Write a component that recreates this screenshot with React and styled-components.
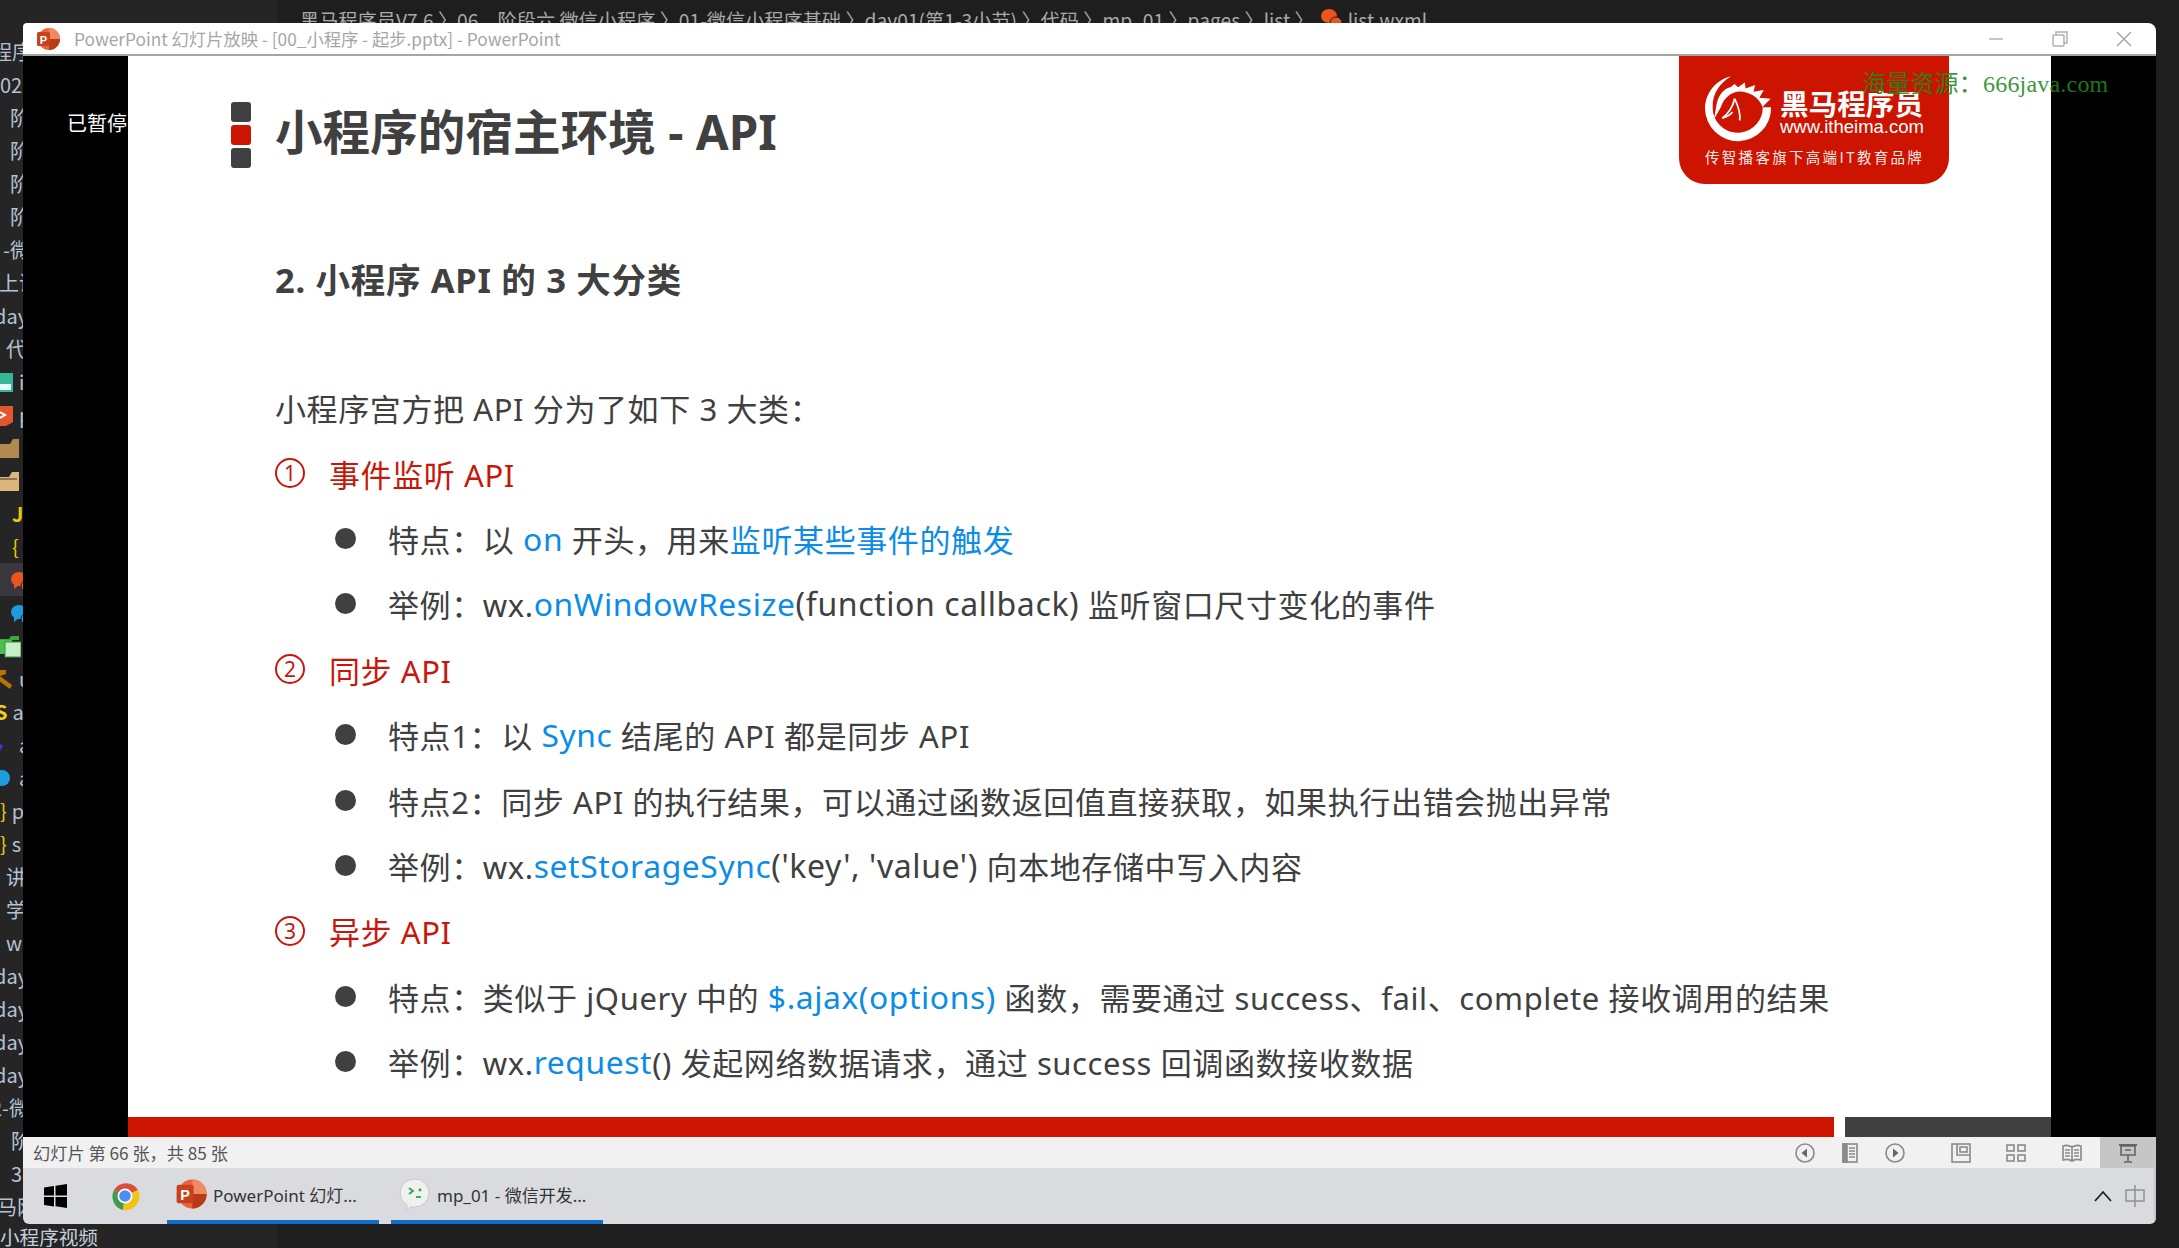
import styled, { createGlobalStyle } from "styled-components";

const GlobalStyle = createGlobalStyle`
    html, body { margin: 0; padding: 0; background: #1e1e1e; }
    body { font-family: "Noto Sans", "Noto Sans CJK SC", sans-serif; overflow: hidden; }
    * { box-sizing: border-box; }
`;

const Page = styled.div`
    width: 2179px;
    height: 1248px;
    display: flex;
    flex-direction: column;
    position: relative;
    overflow: hidden;
    background: #1e1e1e;
`;

/* editor behind the powerpoint window */
const TopStrip = styled.div`
    height: 23px;
    display: flex;
    overflow: hidden;
`;

const SidePatch = styled.div`
    width: 277px;
    flex-shrink: 0;
    background: #252526;
`;

const Breadcrumb = styled.div`
    padding: 7px 0 0 23px;
    font-family: "Noto Sans CJK SC", sans-serif;
    font-size: 19.2px;
    line-height: 26px;
    color: #a9a9a9;
    white-space: nowrap;
    display: flex;
    align-items: flex-start;
    gap: 6px;
`;

const Middle = styled.div`
    height: 1201px;
    display: flex;
`;

const SideList = styled.div`
    width: 23px;
    flex-shrink: 0;
    padding-top: 12px;
    background: #252526;
    overflow: hidden;
`;

const SideRow = styled.div`
    height: 33px;
    width: 60px;
    margin-left: ${(p) => p.$indent || 0}px;
    display: flex;
    align-items: center;
    gap: 5px;
    font-family: "Noto Sans CJK SC", sans-serif;
    font-size: 20px;
    color: ${(p) => p.$color || "#b4c2d2"};
    font-weight: ${(p) => (p.$bold ? 700 : 400)};
    white-space: nowrap;
`;

const RowLabel = styled.span`
    color: #b4c2d2;
    font-weight: 400;
`;

const RowShade = styled.div`
    height: 33px;
    background: #37373d;
`;

const RightGutter = styled.div`
    width: 23px;
    flex-shrink: 0;
    background: #1e1e1e;
`;

const BottomStrip = styled.div`
    height: 24px;
    display: flex;
    overflow: hidden;
`;

const BottomSide = styled.div`
    width: 277px;
    background: #252526;
    font-family: "Noto Sans CJK SC", sans-serif;
    font-size: 19.6px;
    line-height: 26px;
    color: #c4cedb;
    white-space: nowrap;
`;

const Window = styled.div`
    width: 2133px;
    flex-shrink: 0;
    display: flex;
    flex-direction: column;
    border-radius: 4px 8px 6px 6px;
    overflow: hidden;
`;

const TitleBar = styled.div`
    height: 33px;
    flex-shrink: 0;
    display: flex;
    align-items: center;
    padding-left: 13px;
    background: #fff;
    border-bottom: 2px solid #a5a5a5;
`;

const TitleText = styled.div`
    margin-left: 14px;
    font-family: "Noto Sans CJK SC", sans-serif;
    font-size: 17.3px;
    color: #a6a6a6;
    white-space: nowrap;
    flex: 1;
`;

const WinControls = styled.div`
    display: flex;
    align-items: center;
    gap: 44px;
    padding-right: 22px;
`;

const Stage = styled.div`
    flex: 1;
    display: flex;
    background: #000;
    min-height: 0;
`;

const BlackSide = styled.div`
    width: 105px;
    flex-shrink: 0;
    padding: 52px 0 0 44px;
    overflow: hidden;
    color: #fff;
    font-family: "Noto Sans CJK SC", sans-serif;
    font-size: 20px;
    line-height: 30px;
    white-space: nowrap;
`;

const Slide = styled.div`
    width: 1923px;
    flex-shrink: 0;
    position: relative;
    background: #fff;
    display: flex;
    flex-direction: column;
    color: #404040;
`;

const SlideBody = styled.div`
    flex: 1;
    padding: 46px 0 0 147px;
`;

const TitleRow = styled.div`
    height: 66px;
    margin-left: -44px;
    display: flex;
    align-items: center;
    gap: 24px;
`;

const Marker = styled.div`
    width: 20px;
    display: flex;
    flex-direction: column;
    gap: 3px;
`;

const MarkerBlock = styled.div`
    height: 20px;
    border-radius: 3px;
    background: ${(p) => (p.$red ? "#cc1400" : "#404040")};
`;

const SlideTitle = styled.h1`
    margin: -6px 0 0;
    font-family: "Noto Sans", "Noto Sans CJK SC", sans-serif;
    font-size: 47.6px;
    line-height: 66px;
    font-weight: 700;
    white-space: nowrap;
`;

const SubTitle = styled.h2`
    margin: 89px 0 0;
    font-size: 34.5px;
    line-height: 46px;
    letter-spacing: 0.7px;
    font-weight: 700;
    white-space: nowrap;
`;

const List = styled.div`
    margin-top: 72px;
`;

const Line = styled.div`
    height: 65.4px;
    display: flex;
    align-items: center;
    font-size: 31px;
    letter-spacing: 0.6px;
    white-space: pre;
    color: ${(p) => (p.$red ? "#c8170a" : "inherit")};
    padding-left: ${(p) => (p.$bullet ? 60 : 0)}px;
`;

const Dot = styled.span`
    width: 21px;
    height: 21px;
    border-radius: 50%;
    background: #404040;
    margin-right: 32px;
    flex-shrink: 0;
`;

const NumberMark = styled.span`
    width: 30px;
    height: 30px;
    border: 2px solid #c8170a;
    border-radius: 50%;
    margin-right: 24px;
    font-size: 21px;
    line-height: 26px;
    text-align: center;
    letter-spacing: 0;
    flex-shrink: 0;
`;

const Blue = styled.span`
    color: #0a8ce8;
    font-size: ${(p) => (p.$latin ? "31.8px" : "inherit")};
`;

const Latin = styled.span`
    font-size: 32px;
`;

const Footer = styled.div`
    height: 20px;
    flex-shrink: 0;
    display: flex;
    gap: 11px;
`;

const FooterBar = styled.div`
    background: ${(p) => (p.$dark ? "#404040" : "#cc1400")};
    flex: ${(p) => (p.$dark ? "0 0 206px" : "1")};
`;

const Logo = styled.div`
    position: absolute;
    top: 0;
    right: 102px;
    width: 270px;
    height: 128px;
    padding: 20px 25px 0 26px;
    background: #cc1400;
    border-radius: 0 0 26px 26px;
    color: #fff;
`;

const LogoMain = styled.div`
    display: flex;
    align-items: center;
    gap: 9px;
`;

const LogoWords = styled.div`
    display: flex;
    flex-direction: column;
    padding-top: 8px;
`;

const LogoName = styled.div`
    font-size: 28.6px;
    line-height: 28px;
    font-weight: 700;
    font-family: "Noto Sans CJK SC", sans-serif;
    white-space: nowrap;
`;

const LogoUrl = styled.div`
    font-family: "Liberation Sans", sans-serif;
    font-size: 18.5px;
    line-height: 20px;
    white-space: nowrap;
`;

const LogoTag = styled.div`
    margin-top: 5px;
    font-family: "Noto Sans CJK SC", sans-serif;
    font-size: 14.5px;
    line-height: 20px;
    letter-spacing: 2.3px;
    white-space: nowrap;
    opacity: 0.9;
`;

const Watermark = styled.div`
    position: absolute;
    top: 67px;
    left: 1862px;
    font-family: "Liberation Serif", "Noto Sans CJK SC", serif;
    font-size: 24px;
    letter-spacing: 0.2px;
    line-height: 34px;
    color: #1d8a1d;
    opacity: 0.88;
    white-space: nowrap;
`;

const StatusBar = styled.div`
    height: 31px;
    flex-shrink: 0;
    display: flex;
    align-items: center;
    background: #f1f1f1;
    padding-left: 10px;
`;

const StatusText = styled.div`
    flex: 1;
    font-family: "Noto Sans CJK SC", sans-serif;
    font-size: 17.2px;
    color: #555;
    white-space: nowrap;
`;

const StatusIcons = styled.div`
    height: 100%;
    display: flex;
    align-items: center;
`;

const StatusBtn = styled.div`
    width: ${(p) => p.$w}px;
    margin-right: ${(p) => p.$gap || 0}px;
    height: 100%;
    display: flex;
    align-items: center;
    justify-content: center;
    background: ${(p) => (p.$active ? "#c6c6c6" : "transparent")};
`;

const Taskbar = styled.div`
    height: 56px;
    flex-shrink: 0;
    display: flex;
    align-items: stretch;
    background: #d9dbdf;
    border-right: 2px solid #c4c6ca;
`;

const StartSlot = styled.div`
    width: ${(p) => p.$w}px;
    flex-shrink: 0;
    display: flex;
    align-items: center;
    justify-content: center;
`;

const TaskGroup = styled.div`
    display: flex;
    padding-left: 5px;
`;

const TaskButton = styled.div`
    width: 212px;
    margin-right: 12px;
    flex-shrink: 0;
    display: flex;
    align-items: center;
    gap: 6px;
    padding-left: 8px;
    border-bottom: 4px solid #0f6fc6;
    font-family: "Noto Sans", "Noto Sans CJK SC", sans-serif;
    font-size: 17px;
    color: #333;
    white-space: nowrap;
`;

const Tray = styled.div`
    margin-left: auto;
    display: flex;
    align-items: center;
    gap: 12px;
    padding-right: 9px;
`;

const sideRows = [
    { text: "程序", indent: -8 },
    { text: "02", indent: 0 },
    { text: "阶", indent: 10 },
    { text: "阶", indent: 10 },
    { text: "阶", indent: 10 },
    { text: "阶", indent: 10 },
    { text: "-微", indent: 3 },
    { text: "上课", indent: -1 },
    { text: "day", indent: -6 },
    { text: "代", indent: 6 },
    { icon: "image", text: "i", indent: -7 },
    { icon: "html", text: "p", indent: -7 },
    { icon: "folder", indent: -1 },
    { icon: "open", indent: -1 },
    { text: "J", indent: 12, color: "#e8c80e", bold: true },
    { text: "{", indent: 12, color: "#e8c80e" },
    { icon: "chatRed", indent: 10, shade: true },
    { icon: "chatBlue", indent: 10 },
    { icon: "sheet", indent: 0 },
    { icon: "key", text: "u", indent: -7 },
    { text: "S", indent: -5, color: "#f2cf14", bold: true, after: "a" },
    { icon: "purple", text: "a", indent: -7 },
    { icon: "dot", text: "a", indent: -7 },
    { text: "}", indent: 0, color: "#e8c80e", after: "p" },
    { text: "}", indent: 0, color: "#e8c80e", after: "s" },
    { text: "讲", indent: 6 },
    { text: "学", indent: 6 },
    { text: "w", indent: 6 },
    { text: "day", indent: -6 },
    { text: "day", indent: -6 },
    { text: "day", indent: -6 },
    { text: "day", indent: -6 },
    { text: "2-微", indent: -9 },
    { text: "阶", indent: 11 },
    { text: "3", indent: 11 },
    { text: "马网", indent: -3 },
];

function SideIcon({ kind }) {
    const size = { width: 21, height: 24, viewBox: "0 0 21 24", style: { flexShrink: 0 } };
    if (kind === "image") return <svg {...size}><rect x="0" y="3" width="20" height="19" fill="#35b89a" /><rect x="2" y="14" width="16" height="6" fill="#e6fff6" /></svg>;
    if (kind === "html") return <svg {...size}><path d="M0 3h20v16l-7 4H0z" fill="#e4572e" /><path d="M7 9l5 3-5 3" stroke="#fff" strokeWidth="2" fill="none" /></svg>;
    if (kind === "folder") return <svg {...size}><path d="M0 8h11l3-5h6v19H0z" fill="#b08a50" /></svg>;
    if (kind === "open") return <svg {...size}><path d="M0 8h10l3-5h7v19H0z" fill="#dcb67a" /><path d="M0 10h18" stroke="#3a3224" strokeWidth="1" /></svg>;
    if (kind === "chatRed" || kind === "chatBlue") {
        const c = kind === "chatRed" ? "#e8561e" : "#1f9be0";
        return <svg {...size}><ellipse cx="9" cy="11" rx="8" ry="7" fill={c} /><path d="M4 16v5l5-4z" fill={c} /><circle cx="17" cy="18" r="6" fill={c} stroke="#252526" /></svg>;
    }
    if (kind === "sheet") return <svg {...size}><path d="M0 5h9l2-3h8v4H0z" fill="#3aa83f" /><rect x="0" y="6" width="12" height="14" fill="#4cc04f" /><rect x="5" y="8" width="16" height="15" fill="#c7f0c9" stroke="#2e9c34" /></svg>;
    if (kind === "key") return <svg {...size}><path d="M1 3h12v4L7 9l12 9-2 4L3 12 0 14z" fill="#b87400" /></svg>;
    if (kind === "purple") return <svg {...size}><path d="M0 2l6 8 4 3-3 5-7 5z" fill="#4a2ee8" /><circle cx="5" cy="10" r="2" fill="#fff" /></svg>;
    return <svg {...size}><circle cx="9" cy="12" r="8" fill="#1f9be0" /></svg>;
}

function SideEntries() {
    return sideRows.map((row, i) => {
        const inner = (
            <SideRow key={i} $indent={row.indent} $color={row.color} $bold={row.bold}>
                {row.icon && <SideIcon kind={row.icon} />}
                {row.icon ? <RowLabel>{row.text}</RowLabel> : row.text}
                {row.after && <RowLabel>{row.after}</RowLabel>}
            </SideRow>
        );
        return row.shade ? <RowShade key={i}>{inner}</RowShade> : inner;
    });
}

function PptIcon({ size = 24 }) {
    return (
        <svg width={size} height={size + 2} viewBox="0 0 24 26" style={{ flexShrink: 0 }}>
            <circle cx="13" cy="13" r="11" fill="#e8663a" />
            <path d="M13 2a11 11 0 0 1 11 11H13z" fill="#f08a60" />
            <path d="M13 13h11a11 11 0 0 1-11 11z" fill="#b93a18" />
            <rect x="1" y="6" width="13" height="14" rx="1.5" fill="#c8401c" />
            <text x="7.5" y="17.5" textAnchor="middle" fontSize="11" fontWeight="700" fill="#fff" fontFamily="Liberation Sans, sans-serif">P</text>
        </svg>
    );
}

// coordinates follow the logo crop, circle centre at 150,155
function HorseMark() {
    return (
        <svg width="66" height="66" viewBox="54 59 192 192" fill="#fff" style={{ flexShrink: 0 }}>
            <path d="M130 60C85 70 54 110 54 155A96 96 0 0 0 246 150L222 150A73 73 0 0 1 78 168C70 120 90 85 130 60Z" />
            <path d="M80 185L88 140C95 110 112 95 128 92L140 82L150 92L170 78L172 95L200 85L195 105L225 100L212 122L245 125L225 145L222 150C215 130 195 110 165 105C135 100 110 120 100 150Z" />
            <path d="M140 125C135 150 120 170 104 182M104 182C118 178 128 172 134 164M140 125C150 145 158 165 155 188" stroke="#fff" strokeWidth="5" fill="none" />
        </svg>
    );
}

function TitleButtons() {
    return (
        <WinControls>
            <svg width="20" height="20" viewBox="0 0 20 20"><path d="M3 10h14" stroke="#b5b5b5" strokeWidth="1.6" /></svg>
            <svg width="20" height="20" viewBox="0 0 20 20" fill="none" stroke="#b0b0b0" strokeWidth="1.5"><rect x="3" y="6" width="11" height="11" rx="1" /><path d="M6 6V3h11v11h-3" /></svg>
            <svg width="20" height="20" viewBox="0 0 20 20"><path d="M3 3l14 14M17 3L3 17" stroke="#a8a8a8" strokeWidth="1.5" /></svg>
        </WinControls>
    );
}

function StatusIcon({ kind }) {
    const c = "#8a8a8a";
    const props = { width: 22, height: 22, viewBox: "0 0 22 22", fill: "none", stroke: c, strokeWidth: 1.6 };
    if (kind === "prev") return <svg {...props}><circle cx="11" cy="11" r="9" /><path d="M13 6.5v9L7.5 11z" fill="#666" stroke="none" /></svg>;
    if (kind === "next") return <svg {...props}><circle cx="11" cy="11" r="9" /><path d="M9 6.5v9l5.5-4.500z" fill="#666" stroke="none" /></svg>;
    if (kind === "notes") return <svg {...props}><rect x="4" y="2" width="14" height="18" /><rect x="4" y="2" width="4" height="18" fill={c} /><path d="M10 6h6M10 9h6M10 12h6M10 15h6" /></svg>;
    if (kind === "normal") return <svg {...props}><rect x="2" y="2" width="18" height="18" /><path d="M7 2v11h13" /><rect x="10" y="5" width="7" height="5" /></svg>;
    if (kind === "sorter") return <svg {...props}><rect x="2" y="3" width="7" height="6" /><rect x="13" y="3" width="7" height="6" /><rect x="2" y="13" width="7" height="6" /><rect x="13" y="13" width="7" height="6" /></svg>;
    if (kind === "reading") return <svg {...props}><path d="M11 5C8 3 5 3 2 4v14c3-1 6-1 9 1 3-2 6-2 9-1V4c-3-1-6-1-9 1zM11 5v15M4 8h5M4 11h5M4 14h5M13 8h5M13 11h5M13 14h5" /></svg>;
    return <svg {...props} stroke="#666"><path d="M2 3h18" strokeWidth="2" /><path d="M4 4h14v9H4zM11 13v6M7 20h8M8 8h6" /></svg>;
}

function WinLogo() {
    return (
        <svg width="23" height="24" viewBox="0 0 23 24" fill="#000">
            <path d="M0 3.500L10 2v9.500H0zM11.500 1.800L23 0v11.500H11.500zM0 13h10v9.500L0 21zM11.500 13H23v11l-11.500-1.700z" />
        </svg>
    );
}

function ChromeLogo() {
    return (
        <svg width="30" height="30" viewBox="0 0 30 30">
            <path d="M15 15L4 9A14 14 0 0 1 28 9z" fill="#dd4b39" />
            <path d="M15 15L4 9a14 14 0 0 0 9 20z" fill="#3f9b4f" />
            <path d="M15 15l13-6a14 14 0 0 1-15 20z" fill="#f3c31c" />
            <circle cx="15" cy="15" r="7.500" fill="#fff" />
            <circle cx="15" cy="15" r="5.800" fill="#4a8ef0" />
        </svg>
    );
}

function DevToolIcon() {
    return (
        <svg width="32" height="34" viewBox="0 0 32 34" style={{ flexShrink: 0 }}>
            <path d="M16 2a14 14 0 0 1 0 28h-5l-3 3v-5A14 14 0 0 1 16 2z" fill="#f0f1ee" stroke="#c8cac8" />
            <path d="M10 11l4 3-4 3" stroke="#2aa55a" strokeWidth="1.800" fill="none" />
            <circle cx="21" cy="13" r="1.400" fill="#2aa55a" />
            <path d="M17 20h5" stroke="#2aa55a" strokeWidth="1.800" />
        </svg>
    );
}

function WxmlIcon() {
    return (
        <svg width="22" height="22" viewBox="0 0 22 22" style={{ flexShrink: 0 }}>
            <ellipse cx="9" cy="9" rx="8" ry="7" fill="#e8561e" />
            <circle cx="16" cy="16" r="6" fill="#e8561e" stroke="#1e1e1e" />
        </svg>
    );
}

export default function App() {
    return (
        <Page>
            <GlobalStyle />
            <TopStrip>
                <SidePatch />
                <Breadcrumb>
                    <span>黑马程序员V7.6 〉06、阶段六 微信小程序 〉01-微信小程序基础 〉day01(第1-3小节) 〉代码 〉mp_01 〉pages 〉list 〉</span>
                    <WxmlIcon />
                    <span>list.wxml</span>
                </Breadcrumb>
            </TopStrip>
            <Middle>
                <SideList>
                    <SideEntries />
                </SideList>
                <Window>
                    <TitleBar>
                        <PptIcon />
                        <TitleText>PowerPoint 幻灯片放映 - [00_小程序 - 起步.pptx] - PowerPoint</TitleText>
                        <TitleButtons />
                    </TitleBar>
                    <Stage>
                        <BlackSide>已暂停</BlackSide>
                        <Slide>
                            <SlideBody>
                                <TitleRow>
                                    <Marker>
                                        <MarkerBlock />
                                        <MarkerBlock $red />
                                        <MarkerBlock />
                                    </Marker>
                                    <SlideTitle>小程序的宿主环境 - API</SlideTitle>
                                </TitleRow>
                                <SubTitle>2. 小程序 API 的 3 大分类</SubTitle>
                                <List>
                                    <Line>小程序宫方把 API 分为了如下 3 大类：</Line>
                                    <Line $red><NumberMark>1</NumberMark>事件监听 API</Line>
                                    <Line $bullet><Dot />特点：以 <Blue $latin>on</Blue> 开头，用来<Blue>监听某些事件的触发</Blue></Line>
                                    <Line $bullet><Dot />举例：wx.<Blue $latin>onWindowResize</Blue><Latin>(function callback)</Latin> 监听窗口尺寸变化的事件</Line>
                                    <Line $red><NumberMark>2</NumberMark>同步 API</Line>
                                    <Line $bullet><Dot />特点1：以 <Blue $latin>Sync</Blue> 结尾的 API 都是同步 API</Line>
                                    <Line $bullet><Dot />特点2：同步 API 的执行结果，可以通过函数返回值直接获取，如果执行出错会抛出异常</Line>
                                    <Line $bullet><Dot />举例：wx.<Blue $latin>setStorageSync</Blue><Latin>('key', 'value')</Latin> 向本地存储中写入内容</Line>
                                    <Line $red><NumberMark>3</NumberMark>异步 API</Line>
                                    <Line $bullet><Dot />特点：类似于 jQuery 中的 <Blue $latin>$.ajax(options)</Blue> 函数，需要通过 success、fail、complete 接收调用的结果</Line>
                                    <Line $bullet><Dot />举例：wx.<Blue $latin>request</Blue>() 发起网络数据请求，通过 success 回调函数接收数据</Line>
                                </List>
                            </SlideBody>
                            <Footer>
                                <FooterBar />
                                <FooterBar $dark />
                            </Footer>
                            <Logo>
                                <LogoMain>
                                    <HorseMark />
                                    <LogoWords>
                                        <LogoName>黑马程序员</LogoName>
                                        <LogoUrl>www.itheima.com</LogoUrl>
                                    </LogoWords>
                                </LogoMain>
                                <LogoTag>传智播客旗下高端IT教育品牌</LogoTag>
                            </Logo>
                        </Slide>
                        <BlackSide />
                    </Stage>
                    <StatusBar>
                        <StatusText>幻灯片 第 66 张，共 85 张</StatusText>
                        <StatusIcons>
                            <StatusBtn $w={45}><StatusIcon kind="prev" /></StatusBtn>
                            <StatusBtn $w={45}><StatusIcon kind="notes" /></StatusBtn>
                            <StatusBtn $w={45} $gap={16}><StatusIcon kind="next" /></StatusBtn>
                            <StatusBtn $w={55}><StatusIcon kind="normal" /></StatusBtn>
                            <StatusBtn $w={55}><StatusIcon kind="sorter" /></StatusBtn>
                            <StatusBtn $w={57}><StatusIcon kind="reading" /></StatusBtn>
                            <StatusBtn $w={56} $active><StatusIcon kind="present" /></StatusBtn>
                        </StatusIcons>
                    </StatusBar>
                    <Taskbar>
                        <StartSlot $w={65}><WinLogo /></StartSlot>
                        <StartSlot $w={74}><ChromeLogo /></StartSlot>
                        <TaskGroup>
                            <TaskButton><PptIcon size={32} />PowerPoint 幻灯...</TaskButton>
                            <TaskButton><DevToolIcon />mp_01 - 微信开发...</TaskButton>
                        </TaskGroup>
                        <Tray>
                            <svg width="20" height="12" viewBox="0 0 20 12" fill="none" stroke="#222" strokeWidth="1.8"><path d="M2 11l8-9 8 9" /></svg>
                            <svg width="20" height="24" viewBox="0 0 20 24" fill="none" stroke="#8c8c8c" strokeWidth="1.4"><rect x="1" y="6" width="18" height="11" /><path d="M10 1v22" /></svg>
                        </Tray>
                    </Taskbar>
                </Window>
                <RightGutter />
            </Middle>
            <BottomStrip>
                <BottomSide>小程序视频</BottomSide>
            </BottomStrip>
            <Watermark>海量资源：666java.com</Watermark>
        </Page>
    );
}
